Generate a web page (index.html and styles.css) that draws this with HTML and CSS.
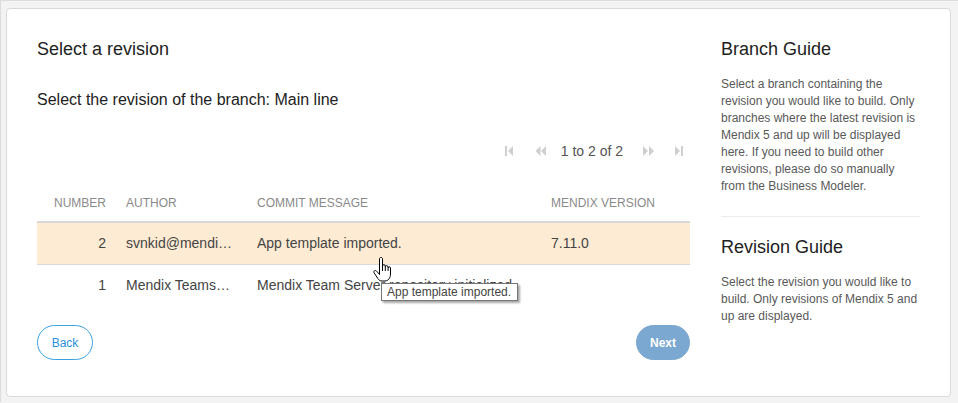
FILE: index.html
```html
<!DOCTYPE html>
<html>
<head>
<meta charset="utf-8">
<link rel="stylesheet" href="styles.css">
</head>
<body>
<div class="card">
  <div class="main">
    <h1 class="title">Select a revision</h1>
    <p class="subtitle">Select the revision of the branch: Main line</p>
    <div class="pager">
      <span class="pg first"><svg width="8" height="10" viewBox="0 0 8 10"><rect x="0" y="0" width="2" height="10" fill="#cfcfcf"/><path d="M8 0 L3 5 L8 10 Z" fill="#cfcfcf"/></svg></span>
      <span class="pg prev"><svg width="11" height="10" viewBox="0 0 11 10"><path d="M5.5 0 L0.5 5 L5.5 10 Z M11 0 L6 5 L11 10 Z" fill="#cfcfcf"/></svg></span>
      <span class="pg-text">1 to 2 of 2</span>
      <span class="pg next"><svg width="12" height="10" viewBox="0 0 12 10"><path d="M0 0 L5 5 L0 10 Z M6 0 L11 5 L6 10 Z" fill="#cfcfcf"/></svg></span>
      <span class="pg last"><svg width="8" height="10" viewBox="0 0 8 10"><path d="M0 0 L5 5 L0 10 Z" fill="#cfcfcf"/><rect x="6" y="0" width="2" height="10" fill="#cfcfcf"/></svg></span>
    </div>
    <div class="grid-wrap">
      <table class="grid">
        <colgroup>
          <col class="c-num"><col class="c-author"><col class="c-msg"><col class="c-ver">
        </colgroup>
        <thead>
          <tr><th class="num">Number</th><th>Author</th><th>Commit message</th><th>Mendix version</th></tr>
        </thead>
        <tbody>
          <tr class="selected"><td class="num">2</td><td>svnkid@mendix.com</td><td>App template imported.</td><td>7.11.0</td></tr>
          <tr><td class="num">1</td><td>Mendix Teamserver</td><td>Mendix Team Server repository initialized</td><td></td></tr>
        </tbody>
      </table>
      <svg class="cursor" width="18" height="25" viewBox="0 0 18 25"><path d="M6.5 2 C6.5 1.1 7.1 .5 8 .5 S9.5 1.1 9.5 2 V9 C9.5 8.2 10.1 7.7 10.9 7.7 S12.3 8.2 12.3 9 V10 C12.3 9.2 12.9 8.7 13.7 8.7 S15.1 9.2 15.1 10 V11 C15.1 10.3 15.7 9.8 16.3 9.8 S17.5 10.3 17.5 11 V17 C17.5 20.5 15.5 24 12 24 H9 C7 24 5.8 23 4.8 21.5 L1.2 16 C.6 15.1 .8 14.1 1.6 13.7 S3.3 13.6 3.9 14.4 L6.5 17.5 Z M9.5 9 V14 M12.3 10 V14 M15.1 11 V14" fill="#fff" stroke="#000" stroke-width="1" stroke-linejoin="round"/></svg>
      <div class="tooltip">App template imported.</div>
    </div>
    <div class="actions">
      <button class="btn btn-back">Back</button>
      <button class="btn btn-next">Next</button>
    </div>
  </div>
  <aside class="guide">
    <h2 class="guide-title">Branch Guide</h2>
    <p class="guide-text">Select a branch containing the revision you would like to build. Only branches where the latest revision is Mendix 5 and up will be displayed here. If you need to build other revisions, please do so manually from the Business Modeler.</p>
    <hr class="guide-sep">
    <h2 class="guide-title">Revision Guide</h2>
    <p class="guide-text">Select the revision you would like to build. Only revisions of Mendix 5 and up are displayed.</p>
  </aside>
</div>
</body>
</html>
```

FILE: styles.css
```css
html, body {
  margin: 0;
  padding: 0;
}
body {
  background: #f3f3f3;
  border-top: 1px solid #dcdcdc;
  border-left: 1px solid #dcdcdc;
  height: 402px;
  box-sizing: border-box;
  font-family: "Liberation Sans", Arial, sans-serif;
  color: #333;
  overflow: hidden;
}
.card {
  margin: 7px 0 0 5px;
  width: 945px;
  height: 389px;
  box-sizing: border-box;
  background: #fff;
  border: 1px solid #d9d9d9;
  border-radius: 4px;
  display: flex;
  gap: 31px;
  padding: 30px 29px 0 30px;
}
.main {
  width: 653px;
  flex: none;
}
.title {
  margin: 0;
  font-size: 18px;
  font-weight: normal;
  line-height: 20px;
  color: #222;
}
.subtitle {
  margin: 31px 0 0;
  font-size: 16px;
  line-height: 20px;
  color: #222;
}
.pager {
  margin-top: 31px;
  height: 20px;
  display: flex;
  align-items: center;
  justify-content: flex-end;
  padding-right: 7px;
  font-size: 14px;
  color: #555;
}
.pg {
  display: flex;
  align-items: center;
}
.pg svg { display: block; }
.first { margin-right: 22px; }
.prev { margin-right: 15px; }
.pg-text { margin-right: 20px; line-height: 20px; }
.next { margin-right: 20px; }
.grid-wrap {
  position: relative;
  margin-top: 24px;
}
.grid {
  width: 653px;
  table-layout: fixed;
  border-collapse: collapse;
}
.c-num { width: 79px; }
.c-author { width: 131px; }
.c-msg { width: 294px; }
.c-ver { width: 149px; }
.grid th {
  font-size: 12px;
  font-weight: normal;
  text-transform: uppercase;
  color: #8a8a8a;
  text-align: left;
  padding: 10px 10px;
  line-height: 16px;
  border-bottom: 2px solid #d8d8d8;
}
.grid td {
  font-size: 14px;
  line-height: 17px;
  padding: 12px 10px;
  color: #444;
  white-space: nowrap;
  overflow: hidden;
  text-overflow: ellipsis;
}
.grid .num { text-align: right; }
.grid tbody tr.selected td {
  background: #fdebd3;
  border-bottom: 1px solid #dadada;
}
.cursor {
  position: absolute;
  left: 336px;
  top: 72px;
}
.tooltip {
  position: absolute;
  left: 344px;
  top: 98px;
  height: 18px;
  box-sizing: border-box;
  padding: 0 6px 0 5px;
  border: 1px solid #767676;
  background: #fff;
  font-size: 12px;
  line-height: 17px;
  color: #444;
  white-space: nowrap;
  box-shadow: 2px 2px 2px rgba(0,0,0,0.35);
}
.actions {
  margin-top: 19px;
  display: flex;
  justify-content: space-between;
}
.btn {
  height: 35px;
  box-sizing: border-box;
  border-radius: 18px;
  font-family: "Liberation Sans", Arial, sans-serif;
  font-size: 12px;
  line-height: 16px;
  cursor: pointer;
}
.btn-back {
  width: 56px;
  background: #fff;
  border: 1px solid #3aa2e3;
  color: #2b8fd8;
}
.btn-next {
  width: 54px;
  background: #7ba8d0;
  border: 1px solid #7ba8d0;
  color: #fff;
  font-weight: bold;
}
.guide {
  width: 199px;
  flex: none;
}
.guide-title {
  margin: 0;
  font-size: 18px;
  font-weight: normal;
  line-height: 20px;
  color: #222;
}
.guide-text {
  margin: 17px 0 0;
  font-size: 12px;
  line-height: 17px;
  color: #595959;
}
.guide-sep {
  margin: 21px 0 20px;
  border: 0;
  border-top: 1px solid #ececec;
  height: 0;
}
```
